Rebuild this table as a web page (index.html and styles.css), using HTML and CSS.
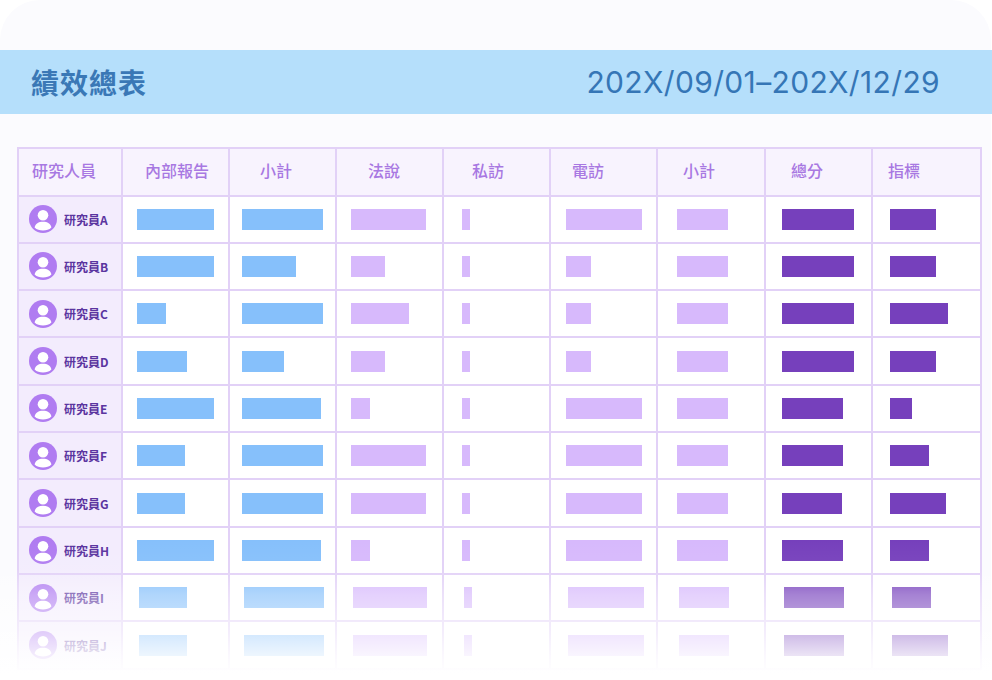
FILE: index.html
```html
<!DOCTYPE html>
<html lang="zh-Hant">
<head>
<meta charset="utf-8">
<title>績效總表</title>
<link rel="stylesheet" href="styles.css">
</head>
<body>
<div class="card">
  <header class="band">
    <h1 class="title">績效總表</h1>
    <span class="date">202X/09/01–202X/12/29</span>
  </header>
  <div class="grid" id="grid">
    <div class="hd">研究人員</div>
    <div class="hd">內部報告</div>
    <div class="hd">小計</div>
    <div class="hd">法說</div>
    <div class="hd">私訪</div>
    <div class="hd">電訪</div>
    <div class="hd">小計</div>
    <div class="hd">總分</div>
    <div class="hd">指標</div>
  </div>
  <div class="fade"></div>
</div>
<script>
(function(){
  var data = [
    ['A',[77,81,75,8,76,51,72,46]],
    ['B',[77,54,34,8,25,51,72,46]],
    ['C',[29,81,58,8,25,51,72,58]],
    ['D',[50,42,34,8,25,51,72,46]],
    ['E',[77,79,19,8,76,51,61,22]],
    ['F',[48,81,75,8,76,51,61,39]],
    ['G',[48,81,75,8,76,51,60,56]],
    ['H',[77,79,19,8,76,51,61,39]],
    ['I',[48,80,74,8,76,50,60,39]],
    ['J',[48,80,74,8,76,50,60,56]]
  ];
  var colors = ['blue','blue','lilac','lilac','lilac','lilac','purple','purple'];
  var avatar = '<svg class="avatar" viewBox="0 0 28 28" width="28" height="28"><circle cx="14" cy="14" r="14" fill="#b07cf1"/><circle cx="14" cy="10.2" r="5.3" fill="#fff"/><path d="M5.6 22.6 C6.2 18.6 9.6 16.8 14 16.8 C18.4 16.8 21.8 18.6 22.4 22.6 C20.2 24.8 17.4 25.6 14 25.6 C10.6 25.6 7.8 24.8 5.6 22.6 Z" fill="#fff"/></svg>';
  var g = document.getElementById('grid');
  var html = '';
  data.forEach(function(row, ri){
    var shift = ri >= 8 ? ' shift' : '';
    html += '<div class="name">' + avatar + '<span>研究員' + row[0] + '</span></div>';
    row[1].forEach(function(w, i){
      html += '<div class="cell' + shift + '"><i class="bar ' + colors[i] + '" style="width:' + w + 'px"></i></div>';
    });
  });
  g.insertAdjacentHTML('beforeend', html);
})();
</script>
</body>
</html>
```

FILE: styles.css
```css
html, body {
  margin: 0;
  padding: 0;
  background: #ffffff;
  overflow: hidden;
}
body {
  width: 992px;
  height: 680px;
  font-family: "Noto Sans CJK TC", "Noto Sans", sans-serif;
}
.card {
  position: relative;
  width: 991px;
  height: 680px;
  background: #fbfbfe;
  border-radius: 40px 40px 0 0;
  padding-top: 50px;
  box-sizing: border-box;
}
.band {
  display: flex;
  align-items: center;
  justify-content: space-between;
  width: 992px;
  height: 64px;
  background: #b5dffb;
  padding: 0 52px 0 31px;
  box-sizing: border-box;
}
.title {
  margin: 0;
  font-size: 28px;
  font-weight: 700;
  letter-spacing: 1px;
  color: #3a78b6;
  font-family: "Noto Sans CJK TC", sans-serif;
  line-height: 1;
}
.date {
  font-family: Inter, "Liberation Sans", sans-serif;
  font-size: 30px;
  letter-spacing: 0.35px;
  font-weight: 400;
  color: #3576b6;
  line-height: 1;
}
.grid {
  display: grid;
  grid-template-columns: 102px repeat(5, 105px) 106px 105px 107px;
  grid-template-rows: 45.5px repeat(10, 45.33px);
  gap: 2px;
  padding: 2px;
  background: #e2d1f7;
  margin: 33px 0 0 17px;
  width: max-content;
}
.hd {
  background: #f8f3fe;
  display: flex;
  align-items: center;
  padding-bottom: 3px;
  box-sizing: border-box;
  font-size: 16px;
  font-weight: 500;
  color: #a878e2;
  line-height: 1;
}
.hd:nth-child(1) { padding-left: 13px; }
.hd:nth-child(2) { padding-left: 22px; }
.hd:nth-child(3) { padding-left: 30px; }
.hd:nth-child(4) { padding-left: 31px; }
.hd:nth-child(5) { padding-left: 28px; }
.hd:nth-child(6) { padding-left: 21px; }
.hd:nth-child(7) { padding-left: 25px; }
.hd:nth-child(8) { padding-left: 25px; }
.hd:nth-child(9) { padding-left: 15px; }
.name {
  background: #f3ecfd;
  display: flex;
  align-items: center;
  gap: 7px;
  padding-left: 10px;
  font-size: 12px;
  font-weight: 700;
  color: #5b35a0;
}
.avatar { flex: none; }
.cell {
  background: #ffffff;
  display: flex;
  align-items: center;
}
.bar {
  display: block;
  height: 21px;
}
.blue { background: #86c0fb; }
.lilac { background: #d7b9fc; }
.purple { background: #7640bc; }
.name + .cell { padding-left: 14px; }
.name + .cell + .cell { padding-left: 12px; }
.name + .cell + .cell + .cell { padding-left: 14px; }
.name + .cell + .cell + .cell + .cell { padding-left: 18px; }
.name + .cell + .cell + .cell + .cell + .cell { padding-left: 15px; }
.name + .cell + .cell + .cell + .cell + .cell + .cell { padding-left: 19px; }
.name + .cell + .cell + .cell + .cell + .cell + .cell + .cell { padding-left: 16px; }
.name + .cell + .cell + .cell + .cell + .cell + .cell + .cell + .cell { padding-left: 17px; }
.cell.shift .bar { margin-left: 2px; }
.fade {
  position: absolute;
  left: 0;
  right: 0;
  top: 540px;
  bottom: 0;
  background: linear-gradient(to bottom,
    rgba(255,255,255,0) 0px,
    rgba(255,255,255,0.05) 30px,
    rgba(255,255,255,0.35) 55px,
    rgba(255,255,255,0.6) 90px,
    rgba(255,255,255,0.85) 115px,
    #ffffff 135px);
  pointer-events: none;
}
```
